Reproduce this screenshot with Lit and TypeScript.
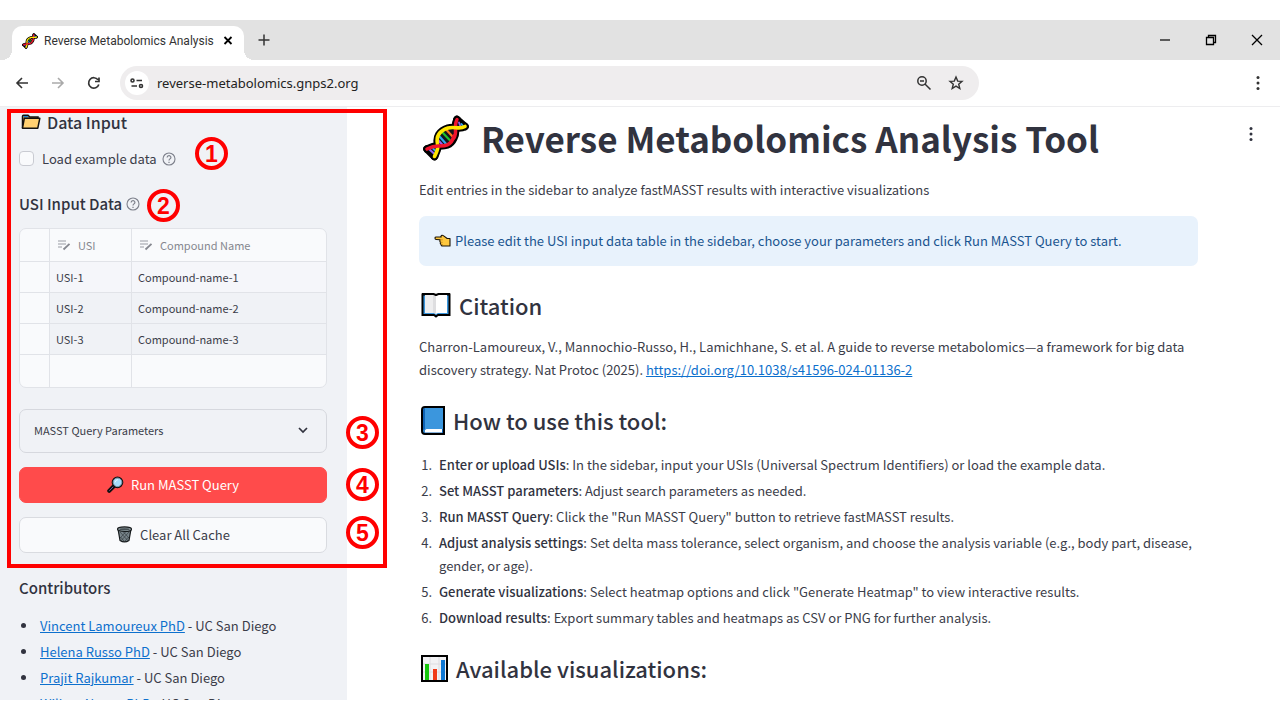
import { LitElement, html, css, svg } from "lit";
import { customElement } from "lit/decorators.js";

const dna = html`<svg class="dna" viewBox="0 0 46 46" aria-hidden="true">
  <g fill="none" stroke-linecap="round" stroke-linejoin="round">
    <g stroke="#000" stroke-width="7.500">
      <path d="M34 4.500C30 12 35 16 31 23C27 32 20 31 15 31C11 31 8 32 4 34"/>
      <path d="M42 11.500C36 15 32 11 25 13C16 16 13 22 14.500 29C16 34 13 38 11.500 41.500"/>
      <path d="M34 4.500L42 11.500M4 34L11.500 41.500"/>
    </g>
    <path d="M34 5L42 11L33 14ZM4 34L14 32L11.500 41ZM25 13L33 12L31 23L25 30L14.500 31V23Z" fill="#15151c"/>
    <path d="M17 22L24 30" stroke="#2ea8f0" stroke-width="2.200"/>
    <path d="M15.500 25.500L20 30.500" stroke="#a25cf5" stroke-width="2"/>
    <path d="M20 18L28 26.500" stroke="#1fc12c" stroke-width="2.200"/>
    <path d="M24 15.500L30 22" stroke="#ff7a1a" stroke-width="2.200"/>
    <path d="M36 7.500L37.500 11.500" stroke="#8f63f0" stroke-width="1.800"/>
    <path d="M38.500 9L40 11" stroke="#2ea8f0" stroke-width="1.800"/>
    <path d="M6.500 34.500L11 38.500" stroke="#8f63f0" stroke-width="2"/>
    <path d="M10 33.500L12 35.500" stroke="#2ea8f0" stroke-width="1.800"/>
    <path d="M34 4.500C30 12 35 16 31 23" stroke="#f0142d" stroke-width="3.400"/>
    <path d="M42 11.500C36 15 32 11 25 13C16 16 13 22 14.500 29C16 34 13 38 11.500 41.500" stroke="#ffe600" stroke-width="3.600"/>
    <path d="M31 21C28 32 20 31 15 31C11 31 8 32 4 34" stroke="#f0142d" stroke-width="3.600"/>
  </g>
</svg>`;

const folder = html`<svg class="folder" viewBox="0 0 20 16" aria-hidden="true">
  <path d="M1.500 14V2.200Q1.500 1.200 2.500 1.200H7L8.800 3H17V5" fill="#e5a62c" stroke="#111" stroke-width="1.500"/>
  <path d="M2.500 2H6.500L8 3.500H2.500Z" fill="#1683d8"/>
  <path d="M3.300 4.300H18.800L16.800 14.200H1.500Z" fill="#ffd071" stroke="#111" stroke-width="1.500" stroke-linejoin="round"/>
</svg>`;

const help = html`<svg class="help" viewBox="0 0 14 14" role="img" aria-label="Help">
  <circle cx="7" cy="7" r="6" fill="none" stroke="#7d808b" stroke-width="1.100"/>
  <path d="M5.100 5.600C5.100 3 8.900 3.100 8.900 5.400C8.900 6.900 7 6.900 7 8.500M7 9.700V10.900" fill="none" stroke="#7d808b" stroke-width="1.200"/>
</svg>`;

const columnIcon = html`<svg class="col-icon" viewBox="0 0 14 12" aria-hidden="true">
  <path d="M1 2H9M1 5H9M1 8H5" stroke="#9a9ca4" stroke-width="1.200"/>
  <path d="M6.500 10.500L12.500 4.800" stroke="#85878f" stroke-width="1.800"/>
</svg>`;

const magnifier = html`<svg class="btn-icon" viewBox="0 0 17 17" aria-hidden="true">
  <path d="M2.200 14.800L7 10" stroke="#111" stroke-width="4" stroke-linecap="round"/>
  <path d="M2.300 14.700L6.500 10.500" stroke="#7d4b9b" stroke-width="1"/>
  <circle cx="10.500" cy="6.300" r="5" fill="#a5dcfb" stroke="#111" stroke-width="1.700"/>
  <circle cx="10.500" cy="6.300" r="4.300" fill="none" stroke="#8fb3cb" stroke-width=".8"/>
  <path d="M8 6.500Q8.500 3.800 11 3.600" fill="none" stroke="#e4f6ff" stroke-width="1"/>
</svg>`;

const bin = html`<svg class="btn-icon" viewBox="0 0 17 17" aria-hidden="true">
  <path d="M2 3L4 14.500Q8.500 17.300 13 14.500L15 3Z" fill="#78848a" stroke="#161a1c" stroke-width="1.200"/>
  <path d="M4 6L12 14.800M7 5.500L13 12M4.500 11L8 15M13 6L5 14.800M10 5.500L4.200 12M12.600 11L9 15" stroke="#2c3336" stroke-width=".6"/>
  <ellipse cx="8.500" cy="3.200" rx="7" ry="2.300" fill="#8a969b" stroke="#161a1c" stroke-width="1.100"/>
  <ellipse cx="8.500" cy="3.200" rx="5" ry="1" fill="#465055"/>
</svg>`;

const hand = html`<svg class="hand" viewBox="0 0 17 14" aria-hidden="true">
  <path d="M1 4.200Q1 2.900 2.300 3H7.200L6.800 2.500Q7.800 .7 9.300 1.600L13.200 4.500H16V12H9Q7.200 12.300 7 10.500Q5.800 9.500 6.400 8.300Q5.400 7.200 6 5.800L2.200 5.500Q1 5.400 1 4.200Z" fill="#ffc83d" stroke="#1b1408" stroke-width="1.100" stroke-linejoin="round"/>
  <path d="M6 5.800H8.800M6.400 8.300H8.600M7 10.500H8.800" stroke="#b97a12" stroke-width=".7"/>
</svg>`;

const openBook = html`<svg class="open-book" viewBox="0 0 30 26" aria-hidden="true">
  <path d="M1.500 2.500H12L15 3.500L18 2.500H28.500V23H17L15 24.500L13 23H1.500Z" fill="#3a96dd" stroke="#000" stroke-width="2"/>
  <path d="M4 2.500H12.500L15 4V22L13 21H4Z" fill="#eeeeef"/>
  <path d="M26 2.500H17.500L15 4V22L17 21H26Z" fill="#fff"/>
  <path d="M12 3.500L15 4V22L12 20.500Z" fill="#dedee0"/>
  <path d="M1 2H12.500L15 3L17.500 2H29" fill="none" stroke="#000" stroke-width="2"/>
</svg>`;

const blueBook = html`<svg class="blue-book" viewBox="0 0 24 29" aria-hidden="true">
  <path d="M1 4Q1 1 4 1H23V28H4Q1 28 1 25Z" fill="#3b96dd" stroke="#000" stroke-width="2"/>
  <path d="M2 4Q2 2 4 2V23Q2.500 23 2 25Z" fill="#0f63b5"/>
  <path d="M22 22V27H4.500Q3 27 3 25.200Q3 23 5 23H22" fill="#0f63b5"/>
  <path d="M4 26.500Q3 23.500 5.500 23H21V26.500Z" fill="#fff"/>
</svg>`;

const chart = html`<svg class="chart" viewBox="0 0 27 27" aria-hidden="true">
  <rect x="1" y="1" width="25" height="25" fill="#f2f2f4" stroke="#000" stroke-width="2"/>
  <path d="M9 2V25M18 2V25M2 9H25M2 17H25" stroke="#dcdce0"/>
  <path d="M4 9H8V25H4Z" fill="#16c60c"/><path d="M12 14H16V25H12Z" fill="#f03a17"/><path d="M20 5H24V25H20Z" fill="#0f78d4"/>
</svg>`;

const dots = (cls: string) => html`<svg class=${cls} viewBox="0 0 16 16" aria-hidden="true">
  <circle cx="8" cy="2.500" r="1.500"/><circle cx="8" cy="8" r="1.500"/><circle cx="8" cy="13.500" r="1.500"/>
</svg>`;

const line = (d: string, w = 1.6) => html`<svg class="ico" viewBox="0 0 16 16" aria-hidden="true">
  ${svg`<path d=${d} stroke-width=${w} fill="none" stroke="currentColor"/>`}
</svg>`;

const rows = ["1", "2", "3"];

const contributors = [
  "Vincent Lamoureux PhD",
  "Helena Russo PhD",
  "Prajit Rajkumar",
  "Wilhan Nunes PhD",
];

const steps: [string, string][] = [
  ["Enter or upload USIs", "In the sidebar, input your USIs (Universal Spectrum Identifiers) or load the example data."],
  ["Set MASST parameters", "Adjust search parameters as needed."],
  ["Run MASST Query", 'Click the "Run MASST Query" button to retrieve fastMASST results.'],
  ["Adjust analysis settings", "Set delta mass tolerance, select organism, and choose the analysis variable (e.g., body part, disease, gender, or age)."],
  ["Generate visualizations", 'Select heatmap options and click "Generate Heatmap" to view interactive results.'],
  ["Download results", "Export summary tables and heatmaps as CSV or PNG for further analysis."],
];

const reset = css`
  *, *::before, *::after { box-sizing: border-box; }
  h1, h2, h3, p, ul, ol { margin: 0; padding: 0; }
  ul, ol { list-style: none; }
  svg { display: block; flex: none; }
  button { font: inherit; color: inherit; border: 0; background: none; padding: 0; cursor: pointer; }
  a { color: #0d70cd; text-decoration: underline; }
`;

@customElement("browser-chrome")
export class BrowserChrome extends LitElement {
  static styles = [reset, css`
    :host { display: block; color: #333; }
    .tabs { display: flex; align-items: flex-end; height: 40px; padding-left: 12px; background: #e2e2e2; }
    .tab {
      position: relative; display: flex; align-items: center; height: 34px; width: 232px; padding: 0 8px 4px 10px;
      background: #fff; border-radius: 10px 10px 0 0; font: 12px/18px Roboto, "Noto Sans", sans-serif; gap: 6px;
    }
    .tab::before, .tab::after { content: ""; position: absolute; bottom: 0; width: 10px; height: 10px; }
    .tab::before { right: 100%; background: radial-gradient(circle at 0 0, transparent 10px, #fff 10px); }
    .tab::after { left: 100%; background: radial-gradient(circle at 100% 0, transparent 10px, #fff 10px); }
    .tab .dna { width: 16px; height: 16px; }
    .title { flex: 1; min-width: 0; white-space: nowrap; }
    .ico { width: 16px; height: 16px; }
    .close { color: #000; }
    .new { align-self: center; margin-left: 12px; color: #333; }
    .window { display: flex; gap: 30px; margin-left: auto; align-self: center; padding-right: 15px; color: #000; }
    .bar { display: flex; align-items: center; height: 47px; padding: 0 14px; border-bottom: 1px solid #ededef; background: #fff; }
    .nav { display: flex; gap: 20px; margin-right: 18px; }
    .off { color: #aaa; }
    .address {
      display: flex; align-items: center; height: 34px; flex: 0 1 859px; padding: 0 15px 0 5px;
      border-radius: 17px; background: #efedee;
    }
    .site { display: grid; place-items: center; width: 24px; height: 24px; border-radius: 12px; background: #fff; }
    input {
      flex: 1; min-width: 0; margin-left: 8px; padding: 0; border: 0; outline: 0; background: none;
      font: 13px/20px "Noto Sans", "Open Sans", sans-serif; color: #222;
    }
    .tools { display: flex; gap: 16px; }
    .menu { margin-left: auto; }
    .kebab { width: 16px; height: 16px; fill: #333; }
  `];

  render() {
    return html`
      <div class="tabs">
        <div class="tab">${dna}<span class="title">Reverse Metabolomics Analysis</span>
          <button class="close" aria-label="Close tab">${line("M4.500 4L11.500 11M11.500 4L4.500 11", 1.8)}</button>
        </div>
        <button class="new" aria-label="New tab">${line("M8 2.500V13.500M2.500 8H13.500", 1.5)}</button>
        <div class="window">
          <button aria-label="Minimize">${line("M3 8H13", 1.2)}</button>
          <button aria-label="Restore">${line("M3.500 5.500H10.500V12.500H3.500ZM5.500 5V3.500H12.500V10.500H11", 1.3)}</button>
          <button aria-label="Close window">${line("M3 3L13 13M13 3L3 13", 1.3)}</button>
        </div>
      </div>
      <div class="bar">
        <div class="nav">
          <button aria-label="Back">${line("M14 8H3M8 3L3 8L8 13")}</button>
          <button class="off" aria-label="Forward">${line("M2 8H13M8 3L13 8L8 13")}</button>
          <button aria-label="Reload">${line("M12.800 9.500A5.200 5.200 0 1 1 12 4.800M13 2.500V6.500H9", 1.7)}</button>
        </div>
        <div class="address">
          <button class="site" aria-label="Site information">${line("M2 5.500A1.500 1.500 0 1 1 5 5.500A1.500 1.500 0 1 1 2 5.500M7.500 5.500H13M2.500 11H8M10.500 11A1.500 1.500 0 1 1 13.500 11A1.500 1.500 0 1 1 10.500 11")}</button>
          <input type="text" aria-label="Address" value="reverse-metabolomics.gnps2.org">
          <div class="tools">
            <button aria-label="Zoom">${line("M1.800 6A4.200 4.200 0 1 1 10.200 6A4.200 4.200 0 1 1 1.800 6M4 6H8M9.200 9.200L14.500 14.500", 1.5)}</button>
            <button aria-label="Bookmark">${line("M8 2L9.700 6.100L14 6.400L10.700 9.200L11.800 13.600L8 11.200L4.200 13.600L5.300 9.200L2 6.400L6.300 6.100Z", 1.4)}</button>
          </div>
        </div>
        <button class="menu" aria-label="Browser menu">${dots("kebab")}</button>
      </div>`;
  }
}

@customElement("input-sidebar")
export class InputSidebar extends LitElement {
  static styles = [reset, css`
    :host { display: block; background: #f0f2f6; padding: 3px 20px 0 19px; font-size: 13px; line-height: 23px; color: #3b3d49; }
    h2 { display: flex; align-items: center; gap: 6px; font-size: 16px; line-height: 24px; font-weight: 500; color: #31333f; }
    h3 { display: flex; align-items: center; gap: 4px; font-size: 15px; line-height: 24px; font-weight: 500; color: #31333f; }
    .folder { width: 20px; height: 16px; margin-left: 2px; }
    .help { width: 14px; height: 14px; }
    .check { display: flex; align-items: center; margin: 13px 0 22px; }
    .check label { display: flex; align-items: center; gap: 8px; margin-right: 5px; }
    input { appearance: none; width: 15px; height: 15px; margin: 0; border: 1px solid #c9cbd2; border-radius: 4px; background: #f9fafc; }
    table {
      width: 100%; margin: 12px 0 21px; table-layout: fixed; border-collapse: separate; border-spacing: 0;
      border: 1px solid #e1e3e8; border-radius: 7px; overflow: hidden; font-size: 11px; line-height: 20px; background: #f9fafc;
    }
    th, td { height: 32px; padding: 0 6px; text-align: left; font-weight: 400; border-bottom: 1px solid #e1e3e8; border-right: 1px solid #e1e3e8; }
    th { height: 33px; }
    td { height: 31px; }
    tr > :last-child { border-right: 0; }
    tbody tr:last-child td { border-bottom: 0; height: 32px; }
    .select { width: 30px; }
    .usi { width: 82px; }
    .cell { background: #f0f2f6; }
    tr:first-child .cell { background: #f5f6fa; }
    .head { display: flex; align-items: center; gap: 7px; padding-left: 1px; color: #85878f; }
    .col-icon { width: 14px; height: 12px; }
    details { border: 1px solid #d6d8de; border-radius: 7px; font-size: 11px; }
    summary { display: flex; align-items: center; justify-content: space-between; height: 42px; padding: 0 15px 2px 14px; list-style: none; }
    .chev { width: 16px; height: 16px; }
    .btn { display: flex; align-items: center; justify-content: center; gap: 7px; width: 100%; height: 36px; margin-top: 14px; padding-bottom: 2px; border: 1px solid #d9dbe0; border-radius: 7px; background: #f9fafc; }
    .primary { border-color: #ff4b4b; background: #ff4b4b; color: #fff; }
    .btn-icon { width: 17px; height: 17px; }
    .contrib { margin-top: 23px; }
    ul { display: grid; gap: 3px; margin-top: 14px; }
    li { display: grid; grid-template-columns: 21px 1fr; align-items: center; }
    li::before { content: ""; width: 5px; height: 5px; margin-left: 2px; border-radius: 50%; background: #31333f; }
  `];

  render() {
    return html`
      <h2>${folder}Data Input</h2>
      <div class="check">
        <label><input type="checkbox">Load example data</label>${help}
      </div>
      <h3>USI Input Data ${help}</h3>
      <table>
        <thead>
          <tr>
            <th class="select"></th>
            <th class="usi"><span class="head">${columnIcon}USI</span></th>
            <th><span class="head">${columnIcon}Compound Name</span></th>
          </tr>
        </thead>
        <tbody>
          ${rows.map((n) => html`<tr><td></td><td class="cell">USI-${n}</td><td class="cell">Compound-name-${n}</td></tr>`)}
          <tr><td></td><td></td><td></td></tr>
        </tbody>
      </table>
      <details>
        <summary>MASST Query Parameters
          <svg class="chev" viewBox="0 0 16 16" aria-hidden="true"><path d="M4 6L8 10L12 6" fill="none" stroke="#31333f" stroke-width="1.700"/></svg>
        </summary>
      </details>
      <button class="btn primary">${magnifier}Run MASST Query</button>
      <button class="btn">${bin}Clear All Cache</button>
      <h3 class="contrib">Contributors</h3>
      <ul>
        ${contributors.map((name) => html`<li><span><a href="#">${name}</a> - UC San Diego</span></li>`)}
      </ul>`;
  }
}

@customElement("tool-guide")
export class ToolGuide extends LitElement {
  static styles = [reset, css`
    :host { display: block; position: relative; padding: 7px 82px 0 72px; font-size: 13px; line-height: 23px; color: #3b3d49; }
    h1, h2, strong { color: #31333f; }
    h1 { display: flex; align-items: center; gap: 12px; font-size: 35px; line-height: 48px; font-weight: 700; white-space: nowrap; }
    h1 .dna { width: 46px; height: 46px; margin-left: 4px; }
    h2 { display: flex; align-items: center; gap: 8px; margin: 23px 0 14px; padding-left: 2px; font-size: 22px; line-height: 32px; font-weight: 500; }
    .lead { margin: 16px 0 15px; }
    .alert { display: flex; align-items: center; gap: 4px; padding: 13px 15px 14px; border-radius: 7px; background: #e8f2fc; color: #1a5590; }
    .hand { width: 17px; height: 14px; }
    .open-book { width: 30px; height: 26px; }
    .blue-book { width: 24px; height: 29px; }
    .chart { width: 27px; height: 27px; }
    ol { display: grid; gap: 3px; margin-top: 17px; counter-reset: step; }
    li { display: grid; grid-template-columns: 13px 1fr; column-gap: 7px; counter-increment: step; }
    li::before { content: counter(step) "."; text-align: right; }
    strong { font-weight: 500; }
    .more { position: absolute; top: 19px; right: 21px; }
    .kebab { width: 16px; height: 16px; fill: #31333f; }
  `];

  render() {
    return html`
      <button class="more" aria-label="App menu">${dots("kebab")}</button>
      <h1>${dna}Reverse Metabolomics Analysis Tool</h1>
      <p class="lead">Edit entries in the sidebar to analyze fastMASST results with interactive visualizations</p>
      <div class="alert">${hand}<span>Please edit the USI input data table in the sidebar, choose your parameters and click Run MASST Query to start.</span></div>
      <h2>${openBook}Citation</h2>
      <p>Charron-Lamoureux, V., Mannochio-Russo, H., Lamichhane, S. et al. A guide to reverse metabolomics—a framework for big data discovery strategy. Nat Protoc (2025). <a href="#">https://doi.org/10.1038/s41596-024-01136-2</a></p>
      <h2>${blueBook}How to use this tool:</h2>
      <ol>${steps.map(([name, text]) => html`<li><span><strong>${name}</strong>: ${text}</span></li>`)}</ol>
      <h2>${chart}Available visualizations:</h2>`;
  }
}

@customElement("app-root")
export class AppRoot extends LitElement {
  static styles = [reset, css`
    :host { display: flex; flex-direction: column; height: 100vh; box-sizing: border-box; padding: 20px 0; background: #fff; overflow: hidden; }
    .page {
      position: relative; flex: 1; min-height: 0; display: grid; grid-template-columns: 347px 1fr; overflow: hidden;
      font-family: "Noto Sans CJK SC", "Noto Sans", sans-serif;
    }
    .callout { position: absolute; left: 7px; top: 2px; width: 380px; height: 459px; border: 4px solid #f00; pointer-events: none; }
    .mark {
      position: absolute; display: grid; place-items: center; width: 33px; height: 33px; border: 4px solid #f00; border-radius: 50%;
      color: #f00; font: bold 23px/24px "Liberation Sans", sans-serif;
    }
    .m1 { left: 184px; top: 24px; }
    .m2 { left: 136px; top: 76px; }
    .m3 { left: 335px; top: 303px; }
    .m4 { left: 335px; top: 355px; }
    .m5 { left: 335px; top: 403px; }
  `];

  render() {
    return html`
      <browser-chrome></browser-chrome>
      <div class="page">
        <input-sidebar></input-sidebar>
        <tool-guide></tool-guide>
        <div class="callout">
          ${[1, 2, 3, 4, 5].map((n) => html`<span class="mark m${n}">${n}</span>`)}
        </div>
      </div>`;
  }
}
